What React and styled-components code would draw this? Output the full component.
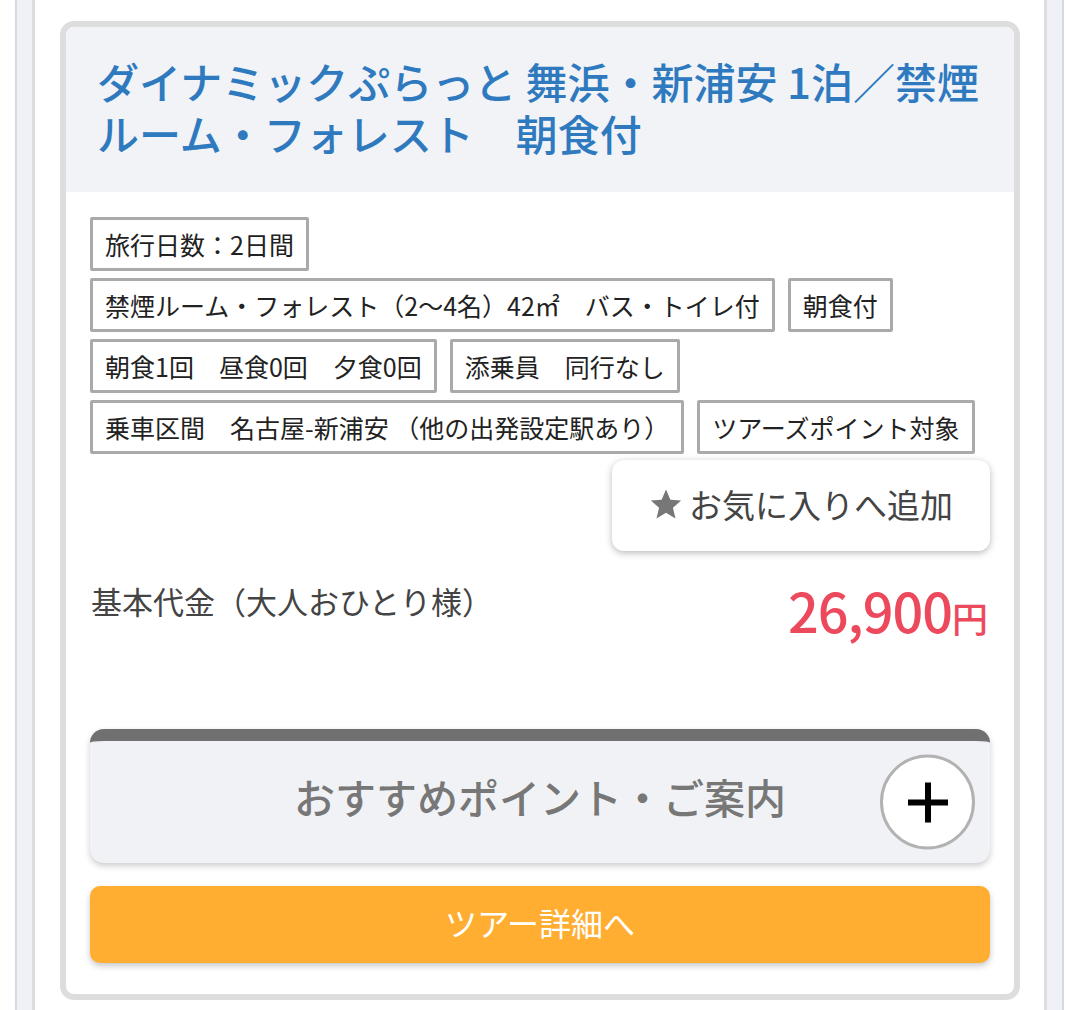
import React from "react";
import styled, { createGlobalStyle } from "styled-components";

const GlobalStyle = createGlobalStyle`
  * { box-sizing: border-box; }
  body {
    margin: 0;
    background: #fff;
    font-family: "Noto Sans CJK JP", "Noto Sans", sans-serif;
  }
`

const Page = styled.div`
  height: 1010px;
  overflow: hidden;
  background: #fff;
  padding-left: 15px;
`

const Rail = styled.div`
  width: 1049px;
  height: 100%;
  background: #eff1f6;
  border-left: 2px solid #d3dce6;
  border-right: 2px solid #d3dce6;
  padding: 0 15px;
`

const Panel = styled.div`
  height: 100%;
  background: #fff;
  border-left: 3px solid #dddddd;
  border-right: 3px solid #dddddd;
  padding: 21px 24px 0 25px;
`

const Card = styled.div`
  width: 960px;
  border: 6px solid #dddddd;
  border-radius: 14px;
  background: #fff;
  overflow: hidden;
`

const Header = styled.div`
  background: #f1f3f7;
  padding: 28px 30px 33px 31px;
  border-radius: 8px 8px 0 0;
`

const Title = styled.h1`
  margin: 0;
  font-size: 42px;
  line-height: 52px;
  font-weight: 500;
  color: #2f7abf;
`

const Body = styled.div`
  padding: 25px 24px 31px 24px;
`

const Tags = styled.div`
  display: flex;
  flex-wrap: wrap;
  gap: 7px 13px;
`

const Tag = styled.span`
  display: inline-block;
  border: 3px solid #aaaaaa;
  border-radius: 2px;
  padding: 0 12px;
  font-size: 25px;
  line-height: 48px;
  color: #222;
  white-space: nowrap;
`

const FavRow = styled.div`
  display: flex;
  justify-content: flex-end;
  margin-top: 6px;
`

const FavButton = styled.button`
  display: flex;
  align-items: center;
  justify-content: center;
  gap: 6px;
  width: 378px;
  height: 91px;
  padding: 0 0 4px;
  border: none;
  border-radius: 12px;
  background: #fff;
  box-shadow: 0 2px 7px rgba(0, 0, 0, 0.28);
  font-family: inherit;
  font-size: 33px;
  color: #444;
  cursor: pointer;
`

const PriceRow = styled.div`
  display: flex;
  justify-content: space-between;
  align-items: flex-start;
  margin-top: 28px;
  height: 150px;
  padding: 0 2px 0 1px;
`

const PriceLabel = styled.div`
  font-size: 31px;
  line-height: 44px;
  color: #444;
`

const Price = styled.div`
  color: #ec4a5c;
  font-size: 54px;
  line-height: 62px;
  font-weight: 500;
  letter-spacing: -1px;
`

const Yen = styled.span`
  font-size: 36px;
  letter-spacing: 0;
`

const Accordion = styled.div`
  position: relative;
  height: 134px;
  padding-bottom: 12px;
  border-top: 12px solid #707070;
  border-radius: 14px;
  background: #f1f2f6;
  box-shadow: 0 3px 6px rgba(0, 0, 0, 0.2);
  display: flex;
  align-items: center;
  justify-content: center;
  font-size: 41px;
  font-weight: 500;
  color: #777;
`

const PlusCircle = styled.span`
  position: absolute;
  right: 15px;
  top: 50%;
  transform: translateY(-50%);
  width: 95px;
  height: 95px;
  border-radius: 50%;
  border: 3px solid #b2b2b2;
  background: #fff;
  display: flex;
  align-items: center;
  justify-content: center;
`

const DetailButton = styled.button`
  display: block;
  width: 100%;
  height: 77px;
  margin-top: 23px;
  padding: 0 0 6px;
  border: none;
  border-radius: 10px;
  background: #ffae31;
  box-shadow: 0 3px 6px rgba(0, 0, 0, 0.22);
  color: #fff;
  font-family: inherit;
  font-size: 32px;
  cursor: pointer;
`

const tags = [
  "旅行日数：2日間",
  "禁煙ルーム・フォレスト（2〜4名）42㎡　バス・トイレ付",
  "朝食付",
  "朝食1回　昼食0回　夕食0回",
  "添乗員　同行なし",
  "乗車区間　名古屋-新浦安 （他の出発設定駅あり）",
  "ツアーズポイント対象",
];

const Star = () => (
  <svg width="34" height="34" viewBox="0 0 24 24">
    <path
      fill="#777"
      d="M12 1.8l3.1 7.2 7.6.6-5.8 5 1.8 7.6L12 18.2l-6.7 4 1.8-7.6-5.8-5 7.6-.6z"
    />
  </svg>
);

const Plus = () => (
  <svg width="44" height="44" viewBox="0 0 44 44">
    <path d="M22 2v40M2 22h40" stroke="#000" strokeWidth="6" />
  </svg>
);

export default function App() {
  return (
    <>
      <GlobalStyle />
      <Page>
        <Rail>
          <Panel>
            <Card>
              <Header>
                <Title>
                  ダイナミックぷらっと 舞浜・新浦安 1泊／禁煙ルーム・フォレスト　朝食付
                </Title>
              </Header>
              <Body>
                <Tags>
                  {tags.map((t) => (
                    <Tag key={t}>{t}</Tag>
                  ))}
                </Tags>
                <FavRow>
                  <FavButton>
                    <Star />
                    お気に入りへ追加
                  </FavButton>
                </FavRow>
                <PriceRow>
                  <PriceLabel>基本代金（大人おひとり様）</PriceLabel>
                  <Price>
                    26,900<Yen>円</Yen>
                  </Price>
                </PriceRow>
                <Accordion>
                  おすすめポイント・ご案内
                  <PlusCircle>
                    <Plus />
                  </PlusCircle>
                </Accordion>
                <DetailButton>ツアー詳細へ</DetailButton>
              </Body>
            </Card>
          </Panel>
        </Rail>
      </Page>
    </>
  );
}
